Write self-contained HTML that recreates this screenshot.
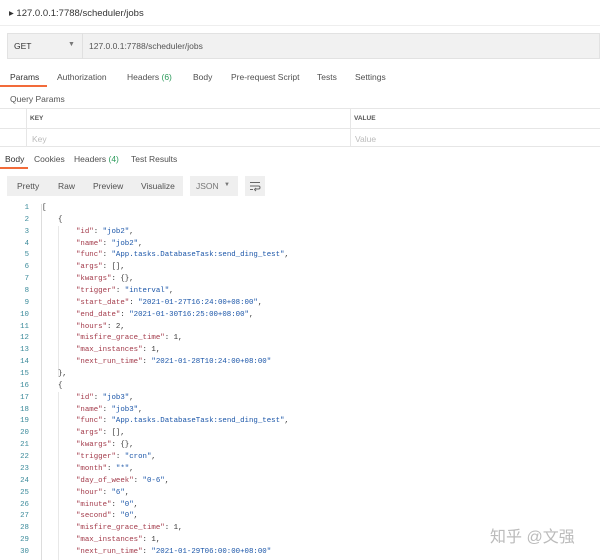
<!DOCTYPE html>
<html><head><meta charset="utf-8"><style>
*{margin:0;padding:0;box-sizing:border-box}
body{width:600px;height:560px;background:#fff;font-family:"Liberation Sans",sans-serif;color:#505050;position:relative;overflow:hidden}
.a{position:absolute;white-space:nowrap}
.s{font-size:8.5px}
.code{position:absolute;left:0;top:203px;width:600px;font-family:"Liberation Mono",monospace;font-size:7.4px;line-height:11.86px}
.ln{position:absolute;left:0;width:29px;text-align:right;color:#3a8a9a;white-space:nowrap}
.tx{position:absolute;left:42px;color:#333;white-space:nowrap}
.k{color:#a33a4a}.v{color:#1a55a8}
</style></head><body>
<div class="a" style="left:9px;top:8px;font-size:9.5px;color:#333">▸ 127.0.0.1:7788/scheduler/jobs</div>
<div class="a" style="left:0;top:25px;width:600px;height:1px;background:#eee"></div>
<div class="a" style="left:7px;top:33px;width:593px;height:26px;background:#f1f1f1;border:1px solid #e2e2e2"></div>
<div class="a" style="left:82px;top:33px;width:1px;height:26px;background:#e0e0e0"></div>
<div class="a s" style="left:14px;top:41px;color:#333">GET</div>
<div class="a" style="left:68px;top:41px;font-size:7px;color:#777">▼</div>
<div class="a s" style="left:89px;top:41px;color:#555">127.0.0.1:7788/scheduler/jobs</div>
<div class="a s" style="left:10px;top:72px;color:#333">Params</div>
<div class="a" style="left:0;top:85px;width:47px;height:2px;background:#f26b3a"></div>
<div class="a s" style="left:57px;top:72px">Authorization</div>
<div class="a s" style="left:127px;top:72px">Headers <span style="color:#2a9a5a">(6)</span></div>
<div class="a s" style="left:193px;top:72px">Body</div>
<div class="a s" style="left:231px;top:72px">Pre-request Script</div>
<div class="a s" style="left:317px;top:72px">Tests</div>
<div class="a s" style="left:355px;top:72px">Settings</div>
<div class="a s" style="left:10px;top:94px;color:#555">Query Params</div>
<div class="a" style="left:0;top:108px;width:600px;height:1px;background:#e6e6e6"></div>
<div class="a" style="left:0;top:128px;width:600px;height:1px;background:#e6e6e6"></div>
<div class="a" style="left:0;top:146px;width:600px;height:1px;background:#e6e6e6"></div>
<div class="a" style="left:26px;top:108px;width:1px;height:38px;background:#e6e6e6"></div>
<div class="a" style="left:350px;top:108px;width:1px;height:38px;background:#e6e6e6"></div>
<div class="a" style="left:30px;top:115px;font-size:6.5px;font-weight:bold;color:#555">KEY</div>
<div class="a" style="left:354px;top:115px;font-size:6.5px;font-weight:bold;color:#555">VALUE</div>
<div class="a s" style="left:32px;top:134px;color:#bbb">Key</div>
<div class="a s" style="left:355px;top:134px;color:#bbb">Value</div>
<div class="a s" style="left:5px;top:154px;color:#333">Body</div>
<div class="a" style="left:0;top:167px;width:28px;height:2px;background:#f26b3a"></div>
<div class="a s" style="left:34px;top:154px">Cookies</div>
<div class="a s" style="left:74px;top:154px">Headers <span style="color:#2a9a5a">(4)</span></div>
<div class="a s" style="left:131px;top:154px">Test Results</div>
<div class="a" style="left:7px;top:176px;width:176px;height:20px;background:#efefef"></div>
<div class="a s" style="left:17px;top:181px">Pretty</div>
<div class="a s" style="left:58px;top:181px">Raw</div>
<div class="a s" style="left:93px;top:181px">Preview</div>
<div class="a s" style="left:141px;top:181px">Visualize</div>
<div class="a" style="left:190px;top:176px;width:48px;height:20px;background:#efefef"></div>
<div class="a s" style="left:196px;top:181px;color:#777">JSON</div>
<div class="a" style="left:224px;top:182px;font-size:6px;color:#777">▼</div>
<div class="a" style="left:245px;top:176px;width:20px;height:20px;background:#efefef"></div>
<svg class="a" style="left:249px;top:180px" width="12" height="12" viewBox="0 0 12 12" fill="none" stroke="#666" stroke-width="1"><path d="M1 2.5h10M1 6h8.5a1.5 1.5 0 0 1 0 3H6M1 9.5h3M7 8l-1.5 1.5L7 11"/></svg>
<div class="a" style="left:41px;top:204px;width:1px;height:356px;background:#ddd"></div>
<div class="a" style="left:58px;top:226px;width:1px;height:150px;background:#e8e8e8"></div>
<div class="a" style="left:58px;top:392px;width:1px;height:168px;background:#e8e8e8"></div>
<div class="code" id="c"></div>
<div class="a" style="left:490px;top:523px;font-family:'Liberation Sans','Noto Sans CJK SC',sans-serif;font-size:16px;color:#bbb">知乎 @文强</div>
<script>
var L=[['[',0],['{',1],['"id"','"job2"',2],['"name"','"job2"',2],['"func"','"App.tasks.DatabaseTask:send_ding_test"',2],['"args"','[]',2,1],['"kwargs"','{}',2,1],['"trigger"','"interval"',2],['"start_date"','"2021-01-27T16:24:00+08:00"',2],['"end_date"','"2021-01-30T16:25:00+08:00"',2],['"hours"','2',2,1],['"misfire_grace_time"','1',2,1],['"max_instances"','1',2,1],['"next_run_time"','"2021-01-28T10:24:00+08:00"',2],['},',1],['{',1],['"id"','"job3"',2],['"name"','"job3"',2],['"func"','"App.tasks.DatabaseTask:send_ding_test"',2],['"args"','[]',2,1],['"kwargs"','{}',2,1],['"trigger"','"cron"',2],['"month"','"*"',2],['"day_of_week"','"0-6"',2],['"hour"','"6"',2],['"minute"','"0"',2],['"second"','"0"',2],['"misfire_grace_time"','1',2,1],['"max_instances"','1',2,1],['"next_run_time"','"2021-01-29T06:00:00+08:00"',2]];
var h='',ind=[0,16,34];
L.forEach(function(l,i){var t=i*11.86;h+='<div class="ln" style="top:'+t+'px">'+(i+1)+'</div>';
if(l.length==2)h+='<div class="tx" style="top:'+t+'px;left:'+(42+ind[l[1]])+'px">'+l[0]+'</div>';
else{var last=(i==13||i==29);h+='<div class="tx" style="top:'+t+'px;left:'+(42+ind[2])+'px"><span class="k">'+l[0]+'</span>: <span class="'+(l[3]?'':'v')+'">'+l[1]+'</span>'+(last?'':',')+'</div>';}});
document.getElementById('c').innerHTML=h;
</script>
</body></html>
